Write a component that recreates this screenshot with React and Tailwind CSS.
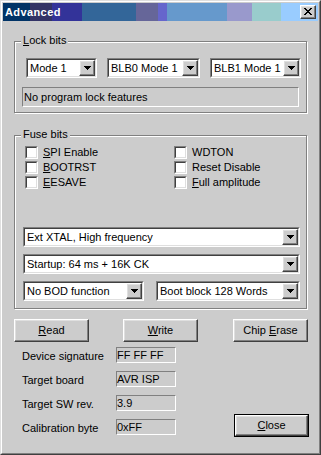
import React from 'react';

const RAISED =
  'border border-t-white border-l-white border-r-[#404040] border-b-[#404040] shadow-[inset_-1px_-1px_0_#808080,inset_1px_1px_0_#dfdfdf]';

const TITLE_SEGMENTS = [
  ['w-[27px]', 'bg-[#003366]'],
  ['w-[22px]', 'bg-[#333366]'],
  ['w-[30px]', 'bg-[#333399]'],
  ['w-[54px]', 'bg-[#336699]'],
  ['w-[22px]', 'bg-[#666699]'],
  ['w-[9px]', 'bg-[#6666cc]'],
  ['w-[60px]', 'bg-[#6699cc]'],
  ['w-[25px]', 'bg-[#9999cc]'],
  ['w-[29px]', 'bg-[#99cccc]'],
  ['flex-1', 'bg-[#99ccff]'],
];

function CloseGlyph() {
  // 8x7 pixel cross, like the classic caption button
  const rows = ['11000011', '01100110', '00111100', '00011000', '00111100', '01100110', '11000011'];
  return (
    <svg width="8" height="7" viewBox="0 0 8 7" shapeRendering="crispEdges">
      {rows.map((row, y) =>
        row.split('').map((c, x) => (c === '1' ? <rect key={`${x}-${y}`} x={x} y={y} width="1" height="1" fill="#000" /> : null))
      )}
    </svg>
  );
}

function TitleBar() {
  return (
    <div className="relative flex h-[18px] mx-[1px] mt-[1px]">
      {TITLE_SEGMENTS.map(([w, bg], i) => (
        <div key={i} className={`${w} ${bg} h-full`} />
      ))}
      <span className="absolute left-[2px] top-[3px] text-white font-bold tracking-[0.4px]">Advanced</span>
      <div className={`absolute right-[2px] top-[2px] w-[16px] h-[14px] bg-[#cccccc] flex items-start pl-[3px] pt-[2px] ${RAISED}`}>
        <CloseGlyph />
      </div>
    </div>
  );
}

function Arrow() {
  return (
    <svg width="7" height="4" viewBox="0 0 7 4" shapeRendering="crispEdges">
      <rect x="0" y="0" width="7" height="1" fill="#000" />
      <rect x="1" y="1" width="5" height="1" fill="#000" />
      <rect x="2" y="2" width="3" height="1" fill="#000" />
      <rect x="3" y="3" width="1" height="1" fill="#000" />
    </svg>
  );
}

function Combo({ value, className = '' }) {
  return (
    <div className={`flex h-[20px] border border-t-[#808080] border-l-[#808080] border-r-white border-b-white ${className}`}>
      <div className="flex flex-1 min-w-0 border border-t-[#404040] border-l-[#404040] border-r-[#dfdfdf] border-b-[#dfdfdf] bg-white">
        <div className="flex-1 min-w-0 pl-[2px] flex items-center whitespace-nowrap overflow-hidden">{value}</div>
        <div className={`w-[16px] h-full bg-[#cccccc] flex items-center justify-center ${RAISED}`}>
          <Arrow />
        </div>
      </div>
    </div>
  );
}

function Check({ children }) {
  return (
    <div className="flex items-center h-[13px]">
      <div className="w-[13px] h-[13px] border border-t-[#808080] border-l-[#808080] border-r-white border-b-white">
        <div className="w-full h-full border border-t-[#404040] border-l-[#404040] border-r-[#dfdfdf] border-b-[#dfdfdf] bg-white" />
      </div>
      <span className="ml-[5px] whitespace-nowrap">{children}</span>
    </div>
  );
}

function Group({ label, className = '', children }) {
  return (
    <div className={`relative w-[293px] border border-[#808080] shadow-[inset_1px_1px_0_#fff,1px_1px_0_#fff] ${className}`}>
      <span className="absolute left-[6px] top-[-8px] px-[2px] bg-[#cccccc] whitespace-nowrap">{label}</span>
      {children}
    </div>
  );
}

function Button({ children, isDefault = false, className = '' }) {
  const label = <span className="whitespace-pre">{children}</span>;
  if (isDefault) {
    return (
      <div className={`w-[75px] h-[23px] border border-black ${className}`}>
        <div className={`w-full h-full flex items-center justify-center ${RAISED}`}>{label}</div>
      </div>
    );
  }
  return <div className={`w-[75px] h-[23px] flex items-center justify-center ${RAISED} ${className}`}>{label}</div>;
}

function Field({ label, value }) {
  return (
    <div className="flex items-center h-[16px]">
      <span className="w-[94px] pt-[2px] whitespace-nowrap">{label}</span>
      <div className="w-[60px] h-[16px] flex items-center border border-t-[#808080] border-l-[#808080] border-r-white border-b-white whitespace-nowrap">
        {value}
      </div>
    </div>
  );
}

const U = ({ children }) => <span className="underline">{children}</span>;

export default function App() {
  return (
    <div className="w-[321px] h-[455px] bg-[#cccccc] text-black text-[11px] leading-[13px] font-['Liberation_Sans',Arial,sans-serif]">
      <div className="h-full border border-t-[#dfdfdf] border-l-[#dfdfdf] border-r-[#404040] border-b-[#404040]">
        <div className="h-full flex flex-col border border-t-white border-l-white border-r-[#808080] border-b-[#808080]">
          <TitleBar />

          <div className="pl-[12px]">
            <Group label={<><U>L</U>ock bits</>} className="mt-[20px] pt-[16px] pb-[5px]">
              <div className="flex pl-[11px]">
                <Combo value="Mode 1" className="w-[71px]" />
                <Combo value="BLB0 Mode 1" className="w-[93px] ml-[10px]" />
                <Combo value="BLB1 Mode 1" className="w-[91px] ml-[10px]" />
              </div>
              <div className="ml-[7px] mt-[9px] w-[277px] h-[20px] flex items-center pl-[1px] border border-t-[#808080] border-l-[#808080] border-r-white border-b-white">
                No program lock features
              </div>
            </Group>

            <Group label="Fuse bits" className="mt-[22px] pt-[10px] pb-[7px]">
              <div className="grid grid-cols-[149px_1fr] pl-[10px]">
                <div className="flex flex-col gap-[2px]">
                  <Check><U>S</U>PI Enable</Check>
                  <Check><U>B</U>OOTRST</Check>
                  <Check><U>E</U>ESAVE</Check>
                </div>
                <div className="flex flex-col gap-[2px]">
                  <Check>WDTON</Check>
                  <Check>Reset Disable</Check>
                  <Check><U>F</U>ull amplitude</Check>
                </div>
              </div>
              <div className="flex flex-col gap-[7px] pl-[8px] mt-[38px]">
                <Combo value="Ext XTAL, High frequency" className="w-[277px]" />
                <Combo value="Startup: 64 ms + 16K CK" className="w-[277px]" />
                <div className="flex">
                  <Combo value="No BOD function" className="w-[121px]" />
                  <Combo value="Boot block 128 Words" className="w-[144px] ml-[12px]" />
                </div>
              </div>
            </Group>

            <div className="flex mt-[10px]">
              <Button><U>R</U>ead</Button>
              <Button className="ml-[34px]"><U>W</U>rite</Button>
              <Button className="ml-[35px]">{'Chip '}<U>E</U>rase</Button>
            </div>
          </div>

          <div className="flex mt-[5px]">
            <div className="flex flex-col gap-[8px] pl-[20px]">
              <Field label="Device signature" value="FF FF FF" />
              <Field label="Target board" value="AVR ISP" />
              <Field label="Target SW rev." value="3.9" />
              <Field label="Calibration byte" value="0xFF" />
            </div>
            <div className="ml-auto mr-[10px] pt-[67px]">
              <Button isDefault><U>C</U>lose</Button>
            </div>
          </div>
        </div>
      </div>
    </div>
  );
}
